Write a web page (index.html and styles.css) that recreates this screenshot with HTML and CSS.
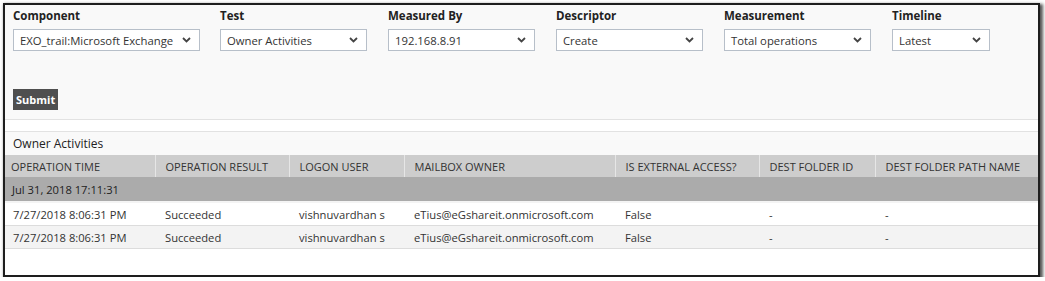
FILE: index.html
```html
<!DOCTYPE html>
<html lang="en">
<head>
    <meta charset="UTF-8">
    <title>Owner Activities</title>
    <link rel="stylesheet" href="styles.css">
</head>
<body>
    <div class="frame">
        <div class="filters">
            <div class="field first">
                <label>Component</label>
                <div class="select wide"><span>EXO_trail:Microsoft Exchange</span><svg width="9" height="6" viewBox="0 0 9 6"><path d="M1 1l3.5 3.5L8 1" fill="none" stroke="#444" stroke-width="1.8"/></svg></div>
            </div>
            <div class="field">
                <label>Test</label>
                <div class="select"><span>Owner Activities</span><svg width="9" height="6" viewBox="0 0 9 6"><path d="M1 1l3.5 3.5L8 1" fill="none" stroke="#444" stroke-width="1.8"/></svg></div>
            </div>
            <div class="field">
                <label>Measured By</label>
                <div class="select"><span>192.168.8.91</span><svg width="9" height="6" viewBox="0 0 9 6"><path d="M1 1l3.5 3.5L8 1" fill="none" stroke="#444" stroke-width="1.8"/></svg></div>
            </div>
            <div class="field">
                <label>Descriptor</label>
                <div class="select"><span>Create</span><svg width="9" height="6" viewBox="0 0 9 6"><path d="M1 1l3.5 3.5L8 1" fill="none" stroke="#444" stroke-width="1.8"/></svg></div>
            </div>
            <div class="field">
                <label>Measurement</label>
                <div class="select"><span>Total operations</span><svg width="9" height="6" viewBox="0 0 9 6"><path d="M1 1l3.5 3.5L8 1" fill="none" stroke="#444" stroke-width="1.8"/></svg></div>
            </div>
            <div class="field">
                <label>Timeline</label>
                <div class="select short"><span>Latest</span><svg width="9" height="6" viewBox="0 0 9 6"><path d="M1 1l3.5 3.5L8 1" fill="none" stroke="#444" stroke-width="1.8"/></svg></div>
            </div>
        </div>
        <div class="actions">
            <button class="submit">Submit</button>
        </div>
        <div class="spacer"></div>
        <div class="title">Owner Activities</div>
        <div class="grid-wrap">
            <table class="grid">
                <thead>
                    <tr>
                        <th class="c1">OPERATION TIME</th>
                        <th class="c2">OPERATION RESULT</th>
                        <th class="c3">LOGON USER</th>
                        <th class="c4">MAILBOX OWNER</th>
                        <th class="c5">IS EXTERNAL ACCESS?</th>
                        <th class="c6">DEST FOLDER ID</th>
                        <th class="c7">DEST FOLDER PATH NAME</th>
                    </tr>
                </thead>
                <tbody>
                    <tr class="group">
                        <td colspan="7">Jul 31, 2018 17:11:31</td>
                    </tr>
                    <tr>
                        <td>7/27/2018 8:06:31 PM</td>
                        <td>Succeeded</td>
                        <td>vishnuvardhan s</td>
                        <td>eTius@eGshareit.onmicrosoft.com</td>
                        <td>False</td>
                        <td>-</td>
                        <td>-</td>
                    </tr>
                    <tr class="alt">
                        <td>7/27/2018 8:06:31 PM</td>
                        <td>Succeeded</td>
                        <td>vishnuvardhan s</td>
                        <td>eTius@eGshareit.onmicrosoft.com</td>
                        <td>False</td>
                        <td>-</td>
                        <td>-</td>
                    </tr>
                </tbody>
            </table>
        </div>
    </div>
</body>
</html>
```

FILE: styles.css
```css
body {
    margin: 0;
    background-color: #fff;
    font-family: "Open Sans", "DejaVu Sans", sans-serif;
    font-size: 11px;
    color: #333;
}

.frame {
    display: flex;
    flex-direction: column;
    margin: 3px 0 0 3px;
    width: 1033px;
    height: 270px;
    background-color: #f9f9f9;
    border: 2px solid #1e1e1e;
    box-shadow: 2px 2px 3px 1px #555;
    overflow: hidden;
}

.filters {
    display: flex;
    padding: 3px 0 0 8px;
}

.field {
    flex-shrink: 0;
    width: 168px;
}

.field.first {
    width: 207px;
}

.field label {
    display: block;
    font-weight: bold;
    font-size: 11.5px;
    color: #222;
    line-height: 16px;
    margin-bottom: 5px;
}

.select {
    display: flex;
    align-items: center;
    justify-content: space-between;
    box-sizing: border-box;
    width: 147px;
    height: 22px;
    padding: 0 8px 0 6px;
    background-color: #fff;
    border: 1px solid #b7bfc9;
    color: #333;
    font-size: 11.3px;
}

.select.wide {
    width: 187px;
}

.select.short {
    width: 98px;
}

.actions {
    padding: 38px 0 0 8px;
    height: 21px;
}

.submit {
    height: 21px;
    padding: 0 3px;
    border: none;
    background-color: #4f4f4f;
    color: #fff;
    font-family: inherit;
    font-size: 11px;
    font-weight: bold;
}

.spacer {
    margin-top: 9px;
    height: 11px;
    border-top: 1px solid #e2e2e2;
    border-bottom: 1px solid #e2e2e2;
    background-color: #fff;
}

.title {
    height: 23px;
    line-height: 23px;
    padding-left: 8px;
    font-size: 12px;
    color: #222;
}

.grid-wrap {
    flex: 1;
    background-color: #fff;
}

.grid {
    width: 100%;
    border-collapse: collapse;
    table-layout: fixed;
}

.grid th {
    box-sizing: border-box;
    height: 22px;
    padding: 0 0 0 10px;
    background-color: #cdcdcd;
    border-left: 1px solid #e6e6e6;
    text-align: left;
    font-weight: normal;
    color: #333;
    white-space: nowrap;
}

.grid th.c1 {
    border-left: none;
    padding-left: 6px;
}

.c1 { width: 150px; }
.c2 { width: 134px; }
.c3 { width: 115px; }
.c4 { width: 211px; }
.c5 { width: 144px; }
.c6 { width: 116px; }

.grid td {
    height: 22px;
    padding: 0 0 0 10px;
    border-bottom: 1px solid #dcdcdc;
    background-color: #fff;
    white-space: nowrap;
    font-size: 11.2px;
}

.grid td:first-child {
    padding-left: 8px;
}

.grid tr.alt td {
    background-color: #f3f3f3;
}

.grid tr.group td {
    height: 24px;
    padding-left: 7px;
    background-color: #ababab;
    border-bottom: 2px solid #f4f4f4;
    color: #222;
}
```
